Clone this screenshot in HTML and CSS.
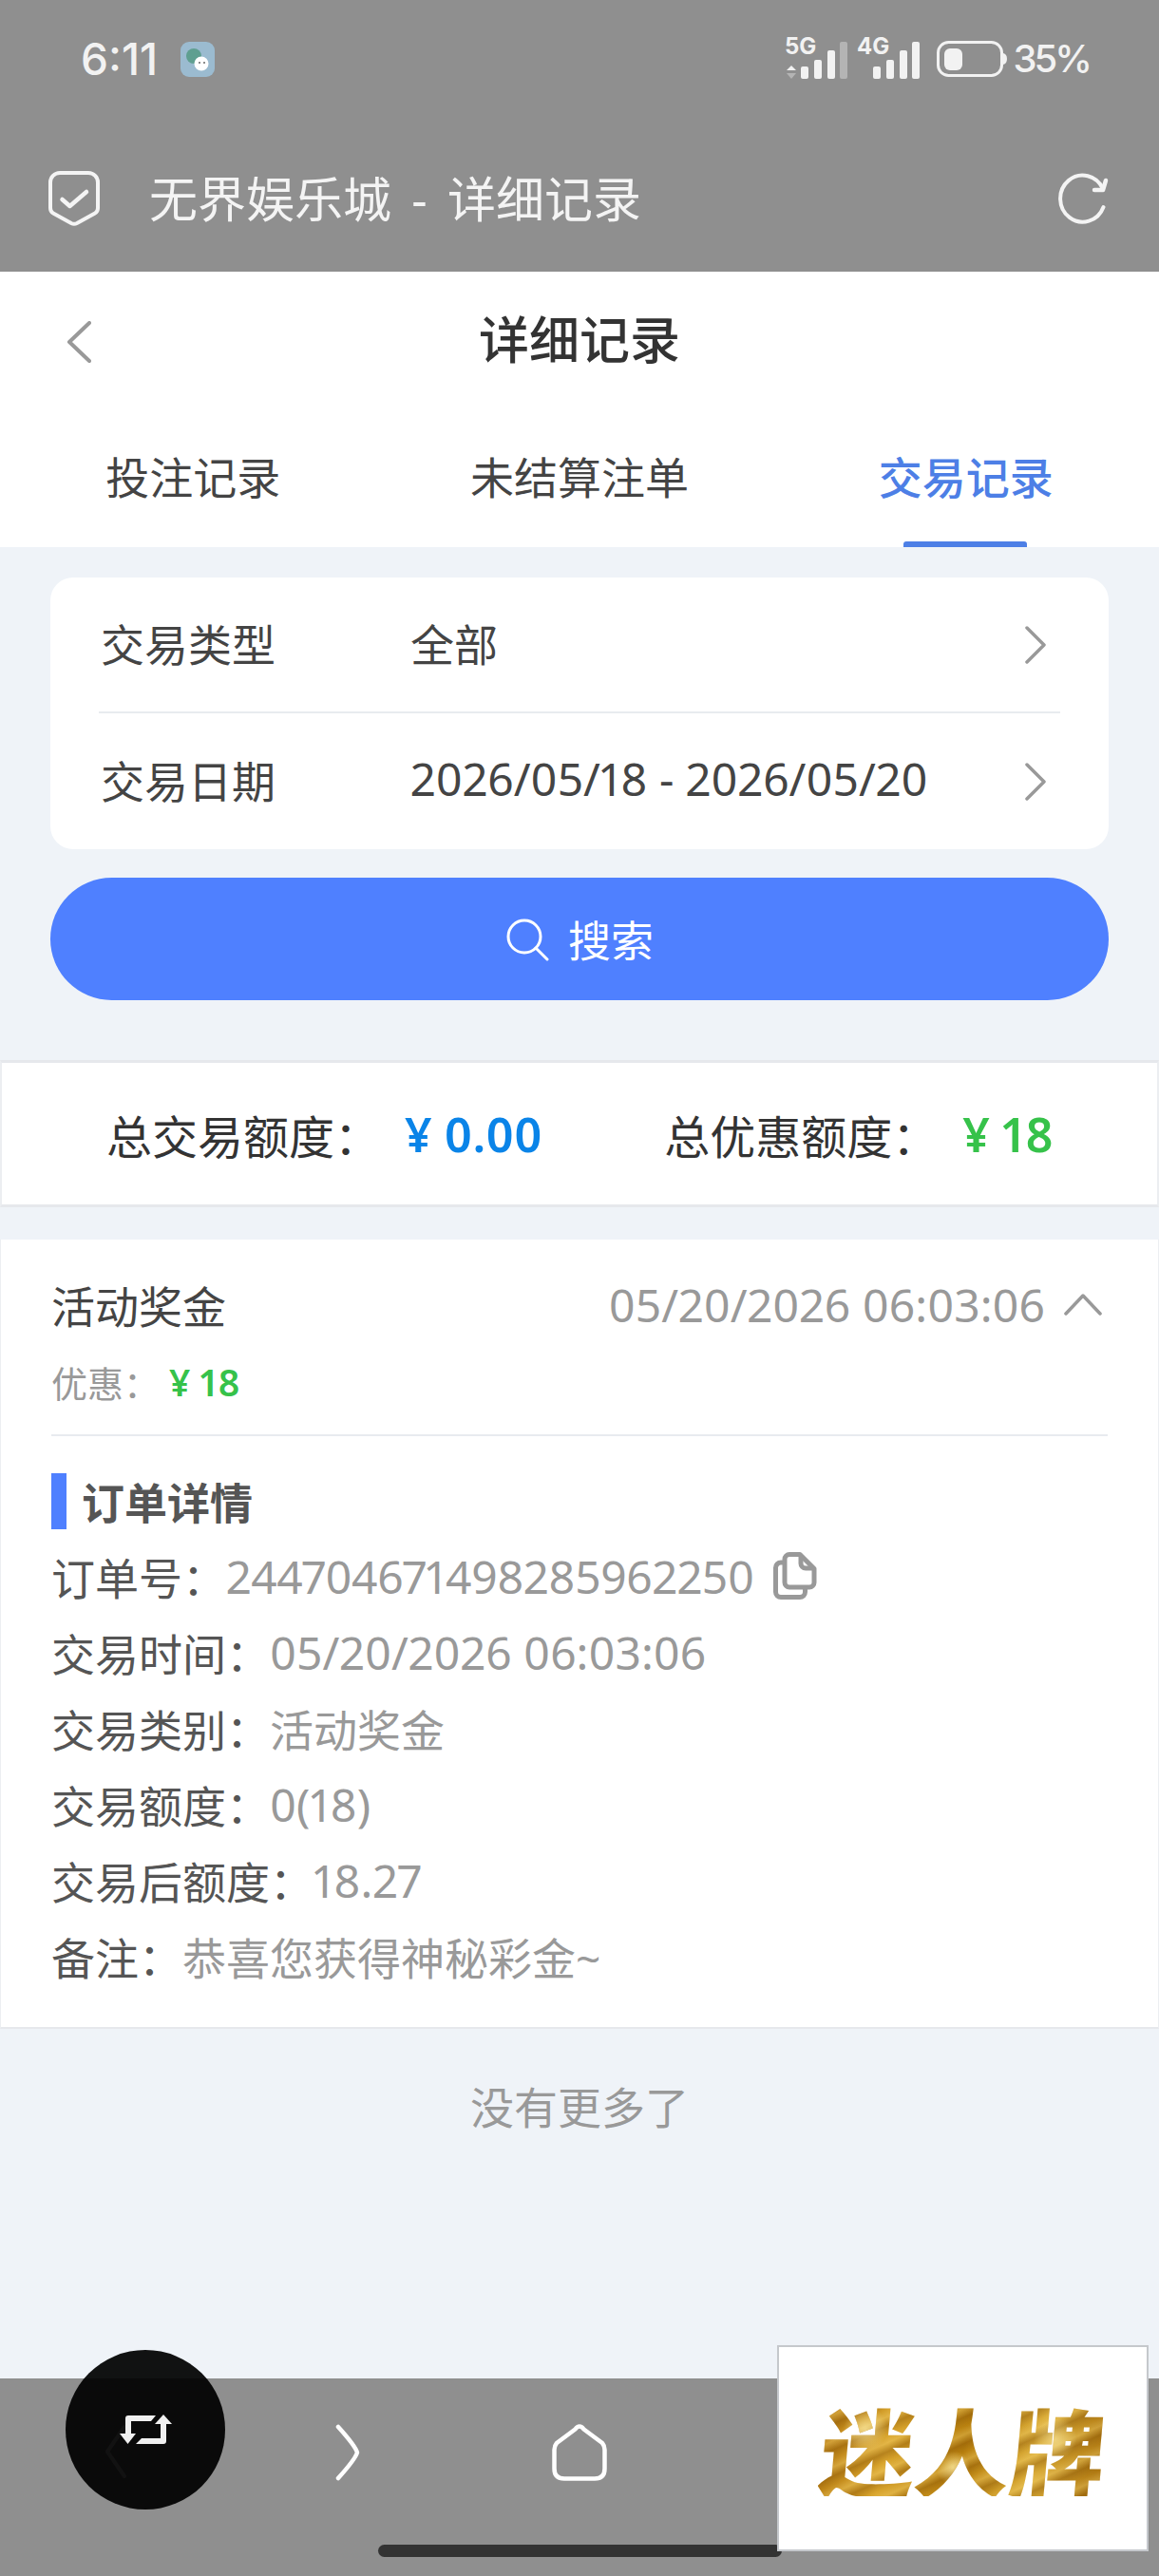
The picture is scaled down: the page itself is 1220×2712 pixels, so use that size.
FILE: index.html
```html
<!DOCTYPE html>
<html lang="zh-CN">
<head>
    <meta charset="UTF-8">
    <meta name="viewport" content="width=device-width, initial-scale=1.0">
    <title>无界娱乐城 - 详细记录</title>
    <link rel="stylesheet" href="styles.css">
</head>
<body>
<div class="page">
    <div class="statusbar">
        <div class="status-left">
            <span class="time">6:11</span>
            <svg class="app-badge" width="36" height="37" viewBox="0 0 36 37">
                <rect width="36" height="37" rx="9" fill="#9bbbd0"/>
                <circle cx="14" cy="15" r="8" fill="#5f9f90"/>
                <circle cx="22" cy="23" r="7.500" fill="#fff"/>
                <circle cx="20" cy="22" r="1" fill="#666"/>
                <circle cx="25" cy="22" r="1" fill="#666"/>
            </svg>
        </div>
        <div class="status-right">
            <svg class="signal" width="150" height="70" viewBox="0 -14 150 70">
                <text x="0" y="16" class="net-label">5G</text>
                <path d="M2 33l5-5 5 5z" fill="#f2f2f2"/>
                <path d="M2 36l5 6 5-6z" fill="#b4b4b4"/>
                <rect x="17" y="29" width="8" height="13" rx="2" fill="#f2f2f2"/>
                <rect x="31" y="22" width="8" height="20" rx="2" fill="#f2f2f2"/>
                <rect x="45" y="12" width="8" height="30" rx="2" fill="#f2f2f2"/>
                <rect x="58" y="3" width="8" height="39" rx="2" fill="#b4b4b4"/>
                <text x="76" y="16" class="net-label">4G</text>
                <rect x="93" y="29" width="8" height="13" rx="2" fill="#f2f2f2"/>
                <rect x="107" y="22" width="8" height="20" rx="2" fill="#f2f2f2"/>
                <rect x="121" y="12" width="8" height="30" rx="2" fill="#f2f2f2"/>
                <rect x="134" y="3" width="8" height="39" rx="2" fill="#f2f2f2"/>
            </svg>
            <svg class="battery" width="74" height="38" viewBox="0 0 74 38">
                <rect x="1.500" y="1.500" width="67" height="35" rx="11" fill="none" stroke="#f2f2f2" stroke-width="3"/>
                <rect x="8" y="8" width="19" height="23" rx="6" fill="#f2f2f2"/>
                <path d="M70 13q4 1 4 6t-4 6z" fill="#f2f2f2"/>
            </svg>
            <span class="percent">35%</span>
        </div>
    </div>

    <div class="appbar">
        <svg class="shield" width="54" height="58" viewBox="0 0 54 58">
            <path d="M12 2h30a10 10 0 0 1 10 10v27q0 4-3 5.500L30 55q-3 1.500-6 0L5 44.500q-3-1.500-3-5.500V12A10 10 0 0 1 12 2z" fill="none" stroke="#f4f4f4" stroke-width="4" stroke-linejoin="round"/>
            <path d="M14.500 30l8 7L40 22" fill="none" stroke="#f4f4f4" stroke-width="4.500" stroke-linecap="round" stroke-linejoin="round"/>
        </svg>
        <span class="appbar-title">无界娱乐城 - 详细记录</span>
        <svg class="reload" width="56" height="54" viewBox="0 0 56 54">
            <path d="M50.500 36A23.500 24.500 0 1 1 50 17" fill="none" stroke="#f4f4f4" stroke-width="4" stroke-linecap="round"/>
            <path d="M53 8l-3 10h-9" fill="none" stroke="#f4f4f4" stroke-width="4.500" stroke-linecap="round" stroke-linejoin="round"/>
        </svg>
    </div>

    <div class="topnav">
        <svg class="back" width="26" height="44" viewBox="0 0 26 44">
            <path d="M24 2L3 22l21 20" fill="none" stroke="#999" stroke-width="4" stroke-linecap="round" stroke-linejoin="round"/>
        </svg>
        <h1>详细记录</h1>
    </div>

    <div class="tabs">
        <div class="tab">投注记录</div>
        <div class="tab">未结算注单</div>
        <div class="tab active">交易记录</div>
    </div>

    <div class="filters">
        <div class="filter-card">
            <div class="filter-row">
                <span class="filter-label">交易类型</span>
                <span class="filter-value">全部</span>
                <svg class="chevron" width="24" height="40" viewBox="0 0 24 40"><path d="M3 2l18 18L3 38" fill="none" stroke="#999" stroke-width="3.500" stroke-linecap="round" stroke-linejoin="round"/></svg>
            </div>
            <div class="filter-row">
                <span class="filter-label">交易日期</span>
                <span class="filter-value num">2026/05/18 - 2026/05/20</span>
                <svg class="chevron" width="24" height="40" viewBox="0 0 24 40"><path d="M3 2l18 18L3 38" fill="none" stroke="#999" stroke-width="3.500" stroke-linecap="round" stroke-linejoin="round"/></svg>
            </div>
        </div>
        <button class="search-btn" type="button">
            <svg width="46" height="46" viewBox="0 0 46 46">
                <circle cx="20" cy="20" r="17" fill="none" stroke="#fff" stroke-width="3"/>
                <path d="M32 32l12 12" stroke="#fff" stroke-width="3" stroke-linecap="round"/>
            </svg>
            <span>搜索</span>
        </button>
    </div>

    <div class="summary">
        <div class="summary-item">
            <span>总交易额度：</span>
            <span class="amount blue">¥ 0.00</span>
        </div>
        <div class="summary-item">
            <span>总优惠额度：</span>
            <span class="amount green">¥ 18</span>
        </div>
    </div>

    <div class="record">
        <div class="record-head">
            <span class="record-title">活动奖金</span>
            <span class="record-date num">05/20/2026 06:03:06</span>
            <svg class="caret" width="40" height="24" viewBox="0 0 40 24"><path d="M2 22L20 3l18 19" fill="none" stroke="#999" stroke-width="3.500" stroke-linecap="round" stroke-linejoin="round"/></svg>
        </div>
        <div class="record-sub">
            <span>优惠：</span>
            <span class="sub-amount">¥ 18</span>
        </div>
        <div class="section-title">订单详情</div>
        <div class="detail-row"><span class="detail-key">订单号：</span><span class="detail-val num order-no">244704671498285962250</span>
            <svg class="copy" width="46" height="50" viewBox="0 0 46 50">
                <path d="M11 11H8a5.500 5.500 0 0 0-5.500 5.500V42A5.500 5.500 0 0 0 8 47.500h20a5.500 5.500 0 0 0 5.500-5.500v-4" fill="none" stroke="#999" stroke-width="5"/>
                <path d="M17 2.500h11l15 15V32a5 5 0 0 1-5 5H17a5 5 0 0 1-5-5V7.500a5 5 0 0 1 5-5z" fill="none" stroke="#999" stroke-width="5" stroke-linejoin="round"/>
                <path d="M29 3v9a5 5 0 0 0 5 5h9" fill="none" stroke="#999" stroke-width="5"/>
            </svg>
        </div>
        <div class="detail-row"><span class="detail-key">交易时间：</span><span class="detail-val num">05/20/2026 06:03:06</span></div>
        <div class="detail-row"><span class="detail-key">交易类别：</span><span class="detail-val">活动奖金</span></div>
        <div class="detail-row"><span class="detail-key">交易额度：</span><span class="detail-val num">0(18)</span></div>
        <div class="detail-row"><span class="detail-key">交易后额度：</span><span class="detail-val num">18.27</span></div>
        <div class="detail-row"><span class="detail-key">备注：</span><span class="detail-val">恭喜您获得神秘彩金~</span></div>
    </div>

    <div class="no-more">没有更多了</div>

    <div class="bottombar">
        <div class="bottom-icons">
            <div class="bottom-cell">
                <svg width="26" height="58" viewBox="0 0 26 58"><path d="M22 3L4 29l18 26" fill="none" stroke="#fff" stroke-width="4" stroke-linecap="round" stroke-linejoin="round"/></svg>
            </div>
            <div class="bottom-cell">
                <svg width="26" height="60" viewBox="0 0 26 60"><path d="M3 3q18 20 20 27Q21 37 3 57" fill="none" stroke="#fff" stroke-width="4.500" stroke-linecap="round" stroke-linejoin="round"/></svg>
            </div>
            <div class="bottom-cell">
                <svg width="58" height="60" viewBox="0 0 58 60"><path d="M29 2.500q2.500 0 4.500 3L53 20q2.500 3 2.500 7v20q0 10.500-10.500 10.500H13Q2.500 57.500 2.500 47V27q0-4 2.500-7L24.500 5.500q2-3 4.500-3z" fill="none" stroke="#fff" stroke-width="4.500" stroke-linejoin="round"/></svg>
            </div>
            <div class="bottom-cell"></div>
            <div class="bottom-cell"></div>
        </div>
        <div class="home-indicator"></div>
    </div>

    <div class="float-btn">
        <svg width="58" height="34" viewBox="0 0 58 34">
            <path d="M39 2H10a3 3 0 0 0-3 3v16h6V8h21z" fill="#f0f0f0"/>
            <path d="M1 21h17l-8.500 11z" fill="#f0f0f0"/>
            <path d="M18 32h29a3 3 0 0 0 3-3V11h-6v15H24z" fill="#f0f0f0"/>
            <path d="M38 11h18L47 1z" fill="#f0f0f0"/>
        </svg>
    </div>

    <div class="ad-box"><span class="ad-text">迷人牌</span></div>
</div>
</body>
</html>
```

FILE: styles.css
```css
* {
    box-sizing: border-box;
}

body {
    margin: 0;
    font-family: "Noto Sans", "Noto Sans CJK SC", sans-serif;
    font-feature-settings: "pnum";
    color: #333;
}

.page {
    position: relative;
    width: 1220px;
    height: 2712px;
    overflow: hidden;
    display: flex;
    flex-direction: column;
    background-color: #eff3f8;
}

.num {
    font-size: 48px;
}

/* status bar */
.statusbar {
    height: 124px;
    flex-shrink: 0;
    padding: 0 73px 0 85px;
    display: flex;
    align-items: center;
    justify-content: space-between;
    background-color: #8f8f8f;
    color: #f2f2f2;
}

.status-left,
.status-right {
    display: flex;
    align-items: center;
}

.time {
    font-family: Inter, sans-serif;
    font-size: 46px;
    font-weight: 500;
    line-height: 1;
}

.app-badge {
    margin-left: 24px;
}

.signal {
    display: block;
}

.net-label {
    font-family: Inter, sans-serif;
    font-size: 24px;
    font-weight: 700;
    fill: #f2f2f2;
}

.battery {
    margin-left: 10px;
}

.percent {
    margin-left: 6px;
    font-family: Inter, sans-serif;
    font-size: 40px;
    font-weight: 500;
    line-height: 1;
    letter-spacing: -3px;
}

/* app title */
.appbar {
    height: 162px;
    flex-shrink: 0;
    padding: 8px 53px 0 51px;
    display: flex;
    align-items: center;
    background-color: #8f8f8f;
    color: #f4f4f4;
}

.appbar-title {
    margin-left: 52px;
    font-size: 51px;
    line-height: 1;
    word-spacing: 8px;
}

.reload {
    margin-left: auto;
}

/* white page header */
.topnav {
    position: relative;
    height: 144px;
    flex-shrink: 0;
    padding-bottom: 6px;
    display: flex;
    align-items: center;
    justify-content: center;
    background-color: #fff;
}

.topnav h1 {
    margin: 0;
    font-size: 53px;
    font-weight: 500;
    color: #333;
}

.back {
    position: absolute;
    left: 70px;
    top: 52px;
}

.tabs {
    height: 146px;
    flex-shrink: 0;
    display: grid;
    grid-template-columns: repeat(3, 1fr);
    background-color: #fff;
}

.tab {
    position: relative;
    padding-bottom: 6px;
    display: flex;
    align-items: center;
    justify-content: center;
    font-size: 46px;
    color: #444;
}

.tab.active {
    color: #4d7fe6;
    font-weight: 500;
}

.tab.active::after {
    content: "";
    position: absolute;
    left: 50%;
    bottom: 0;
    width: 130px;
    height: 6px;
    margin-left: -66px;
    border-radius: 3px 3px 0 0;
    background-color: #4d7fe6;
}

/* filters */
.filters {
    flex-shrink: 0;
    padding: 32px 53px 63px;
}

.filter-card {
    padding: 0 51px;
    border-radius: 24px;
    background-color: #fff;
}

.filter-row {
    height: 143px;
    padding-bottom: 6px;
    display: flex;
    align-items: center;
    font-size: 46px;
    color: #444;
}

.filter-row:first-child {
    border-bottom: 2px solid #e8ebef;
}

.filter-label {
    width: 328px;
    flex-shrink: 0;
    padding-left: 2px;
}

.filter-value {
    flex: 1;
}

.chevron {
    margin: 6px 14px 0 0;
}

.search-btn {
    width: 100%;
    height: 129px;
    margin-top: 30px;
    padding: 0;
    border: none;
    border-radius: 65px;
    display: flex;
    align-items: center;
    justify-content: center;
    gap: 20px;
    background-color: #4f80ff;
    color: #fff;
    font-family: inherit;
    font-size: 45px;
}

/* totals */
.summary {
    height: 155px;
    flex-shrink: 0;
    padding: 0 109px 0 110px;
    display: flex;
    align-items: center;
    justify-content: space-between;
    background-color: #fff;
    border-top: 3px solid #e6e8ec;
    border-bottom: 3px solid #e6e8ec;
    border-left: 2px solid #eceef1;
    border-right: 2px solid #eceef1;
    font-size: 48px;
    color: #333;
}

.summary-item {
    display: flex;
    align-items: center;
    gap: 26px;
}

.amount {
    font-size: 50px;
    font-weight: 600;
}

.blue {
    color: #0a84e8;
}

.green {
    color: #36c24a;
}

/* record */
.record {
    height: 831px;
    flex-shrink: 0;
    margin-top: 34px;
    padding: 38px 53px 0;
    background-color: #fff;
    border-left: 1px solid #eceef1;
    border-right: 1px solid #eceef1;
    border-bottom: 2px solid #e6e8ec;
}

.record-head {
    height: 60px;
    display: flex;
    align-items: center;
}

.record-title {
    font-size: 46px;
    color: #444;
}

.record-date {
    margin-left: auto;
    color: #999;
}

.caret {
    margin-left: 20px;
    margin-right: 6px;
}

.record-sub {
    height: 82px;
    margin-top: 27px;
    padding-bottom: 31px;
    display: flex;
    align-items: center;
    gap: 10px;
    border-bottom: 2px solid #e8ebef;
    font-size: 38px;
    color: #999;
}

.sub-amount {
    font-size: 39px;
    font-weight: 600;
    color: #36c24a;
}

.section-title {
    height: 59px;
    margin-top: 39px;
    padding-left: 16px;
    display: flex;
    align-items: center;
    border-left: 16px solid #4f80ff;
    font-size: 45px;
    font-weight: 600;
    color: #555;
}

.detail-row {
    height: 80px;
    display: flex;
    align-items: center;
    font-size: 46px;
    color: #555;
}

.section-title + .detail-row {
    margin-top: 9px;
}

.detail-val {
    color: #999;
}

.order-no {
    letter-spacing: -0.4px;
}

.copy {
    margin-left: 20px;
}

.no-more {
    padding-top: 57px;
    text-align: center;
    font-size: 46px;
    line-height: 50px;
    color: #999;
}

/* system nav */
.bottombar {
    margin-top: auto;
    height: 208px;
    flex-shrink: 0;
    display: flex;
    flex-direction: column;
    align-items: center;
    background-color: #8f8f8f;
}

.bottom-icons {
    width: 100%;
    height: 156px;
    padding-top: 48px;
    display: grid;
    grid-template-columns: repeat(5, 1fr);
}

.bottom-cell {
    display: flex;
    justify-content: center;
}

.home-indicator {
    width: 425px;
    height: 13px;
    margin-top: 19px;
    border-radius: 7px;
    background-color: #333;
}

/* floating things */
.float-btn {
    position: absolute;
    left: 69px;
    top: 2474px;
    width: 168px;
    height: 168px;
    padding: 0 0 0 1px;
    border-radius: 50%;
    display: flex;
    align-items: center;
    justify-content: center;
    background-color: rgba(0, 0, 0, 0.93);
}

.ad-box {
    position: absolute;
    left: 818px;
    top: 2469px;
    width: 391px;
    height: 217px;
    display: flex;
    align-items: center;
    justify-content: center;
    background-color: #fff;
    border: 2px solid #c5c8cc;
}

.ad-text {
    font-family: "Noto Sans CJK SC", sans-serif;
    font-size: 100px;
    font-weight: 900;
    line-height: 1;
    transform: skewX(-5deg);
    background:
        radial-gradient(circle at 15% 30%, rgba(255, 240, 170, 0.7) 0, rgba(255, 240, 170, 0) 9%),
        radial-gradient(circle at 47% 70%, rgba(255, 240, 170, 0.7) 0, rgba(255, 240, 170, 0) 10%),
        radial-gradient(circle at 82% 40%, rgba(255, 240, 170, 0.6) 0, rgba(255, 240, 170, 0) 9%),
        repeating-linear-gradient(155deg, rgba(120, 70, 0, 0.35) 0, rgba(120, 70, 0, 0) 9px, rgba(255, 225, 130, 0.3) 17px, rgba(120, 70, 0, 0.35) 26px),
        linear-gradient(100deg, #b57a12 0%, #d9a52e 25%, #b8800f 50%, #dcae3a 75%, #a9710c 100%);
    -webkit-background-clip: text;
    background-clip: text;
    color: transparent;
}
```
